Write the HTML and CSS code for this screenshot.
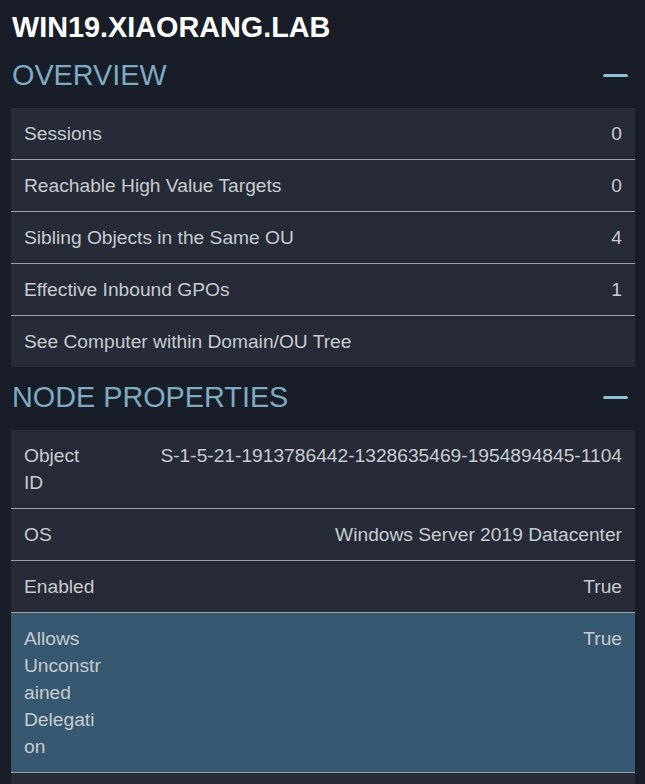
FILE: index.html
```html
<!DOCTYPE html>
<html lang="en">
<head>
<meta charset="utf-8">
<title>WIN19.XIAORANG.LAB</title>
<link rel="stylesheet" href="styles.css">
</head>
<body>
<div class="panel">
  <h1 class="node-title">WIN19.XIAORANG.LAB</h1>

  <section class="section">
    <div class="section-header">
      <h2 class="section-title">OVERVIEW</h2>
      <span class="collapse-icon" aria-label="collapse"></span>
    </div>
    <div class="table">
      <div class="row"><div class="cell-label wide">Sessions</div><div class="cell-value">0</div></div>
      <div class="row"><div class="cell-label wide">Reachable High Value Targets</div><div class="cell-value">0</div></div>
      <div class="row"><div class="cell-label wide">Sibling Objects in the Same OU</div><div class="cell-value">4</div></div>
      <div class="row"><div class="cell-label wide">Effective Inbound GPOs</div><div class="cell-value">1</div></div>
      <div class="row"><div class="cell-label wide">See Computer within Domain/OU Tree</div><div class="cell-value"></div></div>
    </div>
  </section>

  <section class="section">
    <div class="section-header">
      <h2 class="section-title">NODE PROPERTIES</h2>
      <span class="collapse-icon" aria-label="collapse"></span>
    </div>
    <div class="table">
      <div class="row"><div class="cell-label">Object ID</div><div class="cell-value">S-1-5-21-1913786442-1328635469-1954894845-1104</div></div>
      <div class="row"><div class="cell-label">OS</div><div class="cell-value">Windows Server 2019 Datacenter</div></div>
      <div class="row"><div class="cell-label">Enabled</div><div class="cell-value">True</div></div>
      <div class="row is-highlighted"><div class="cell-label">Allows Unconstrained Delegation</div><div class="cell-value">True</div></div>
      <div class="row row-empty"></div>
    </div>
  </section>
</div>
</body>
</html>
```

FILE: styles.css
```css
html, body {
  margin: 0;
  padding: 0;
  background: #181d28;
}

body {
  font-family: "Liberation Sans", Arial, Helvetica, sans-serif;
  color: #c8cbd0;
}

.panel {
  padding: 13px 10px 0 11px;
}

.node-title {
  margin: 0;
  padding: 0 0 3px 1px;
  font-size: 28.8px;
  line-height: 29px;
  font-weight: 700;
  color: #ffffff;
}

.section-header {
  display: flex;
  align-items: center;
  justify-content: space-between;
  padding: 16px 7px 18px 1px;
}

.section-title {
  margin: 0;
  font-size: 28.8px;
  line-height: 29px;
  font-weight: 400;
  color: #7eabc2;
}

.collapse-icon {
  display: block;
  width: 25px;
  height: 3px;
  border-radius: 2px;
  background: #8ec0d6;
}

.table {
  background: #262b37;
  font-size: 19.2px;
  line-height: 27px;
}

.row {
  display: flex;
  align-items: flex-start;
  padding: 12px 13px;
  border-bottom: 1px solid #9da1a6;
}

.row:last-child {
  border-bottom: none;
}

.row.is-highlighted {
  background: #365870;
}

.row-empty {
  min-height: 27px;
}

.cell-label {
  flex: 0 0 77px;
  min-width: 0;
  overflow-wrap: anywhere;
}

.cell-label.wide {
  flex: 1 1 auto;
  overflow-wrap: normal;
}

.cell-value {
  flex: 1 1 auto;
  text-align: right;
}
```
